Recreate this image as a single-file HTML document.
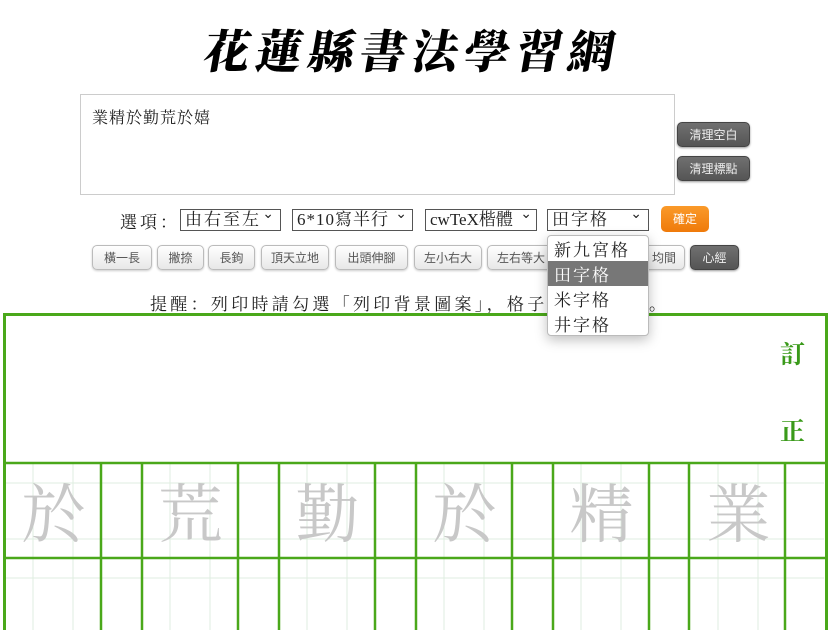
<!DOCTYPE html>
<html><head><meta charset="utf-8"><style>
*{box-sizing:border-box;margin:0;padding:0}
html,body{width:830px;height:630px;overflow:hidden}
body{background:#fff;position:relative;font-family:"Liberation Serif","Noto Serif CJK SC",serif;color:#222}
.abs{position:absolute}
.title{left:205px;top:14px;width:420px;height:70px;font-family:"Noto Serif CJK SC",serif;font-weight:900;font-size:46px;letter-spacing:6px;line-height:70px;transform:skewX(-10deg);color:#000;white-space:nowrap}
.ta{left:80px;top:94px;width:595px;height:101px;border:1px solid #ccc;padding:10px 11px;font-size:16px;letter-spacing:1px;font-family:"Noto Serif CJK SC",serif}
.dbtn{background:linear-gradient(#707070,#555);color:#eee;border:1px solid #444;border-radius:5px;font-size:12px;text-align:center;line-height:24px;font-family:"Noto Sans CJK SC",sans-serif;box-shadow:0 1px 2px #999}
.sel{top:209px;height:22px;border:1px solid #555;font-size:17px;line-height:20px;padding-left:4px;background:#fff;white-space:nowrap;overflow:hidden;font-family:"Liberation Serif","Noto Serif CJK SC",serif}
.sel:after{content:"⌄";position:absolute;right:4px;top:-6px;font-size:14px;font-family:"DejaVu Sans"}
.b{top:245px;height:25px;border:1px solid #bbb;border-radius:5px;background:linear-gradient(#fff,#e8e8e8);font-size:12px;text-align:center;line-height:23px;color:#555;font-family:"Noto Sans CJK SC",sans-serif;box-shadow:0 1px 2px #ccc}
.dd{left:547px;top:235px;width:102px;height:101px;background:#fff;border:1px solid #bbb;border-radius:4px;box-shadow:0 4px 12px rgba(0,0,0,.25);font-size:17px;letter-spacing:2px;font-family:"Noto Serif CJK SC",serif}
.dd div{height:25px;line-height:25px;padding-left:6px}
.grid{left:3px;top:313px;width:825px;height:340px;border:3px solid #4aa81a}
.ch{color:#c8c8c8;font-family:"Noto Serif CJK SC",serif;font-size:64px;width:95px;text-align:center;top:470px;line-height:80px}
</style></head><body>
<div class="abs title">花蓮縣書法學習網</div>
<div class="abs ta">業精於勤荒於嬉</div>
<div class="abs dbtn" style="left:677px;top:122px;width:73px;height:25px">清理空白</div>
<div class="abs dbtn" style="left:677px;top:156px;width:73px;height:25px">清理標點</div>
<div class="abs" style="left:120px;top:208px;font-size:17px;letter-spacing:3px;font-family:'Noto Serif CJK SC',serif">選項：</div>
<div class="abs sel" style="left:180px;width:101px;letter-spacing:2px">由右至左</div>
<div class="abs sel" style="left:292px;width:121px;letter-spacing:1px">6*10寫半行</div>
<div class="abs sel" style="left:425px;width:112px">cwTeX楷體</div>
<div class="abs sel" style="left:547px;width:102px;letter-spacing:2px">田字格</div>
<div class="abs" style="left:661px;top:206px;width:48px;height:26px;background:linear-gradient(#fa9a2a,#ef7a0a);border-radius:5px;color:#fff;font-size:12px;text-align:center;line-height:26px;font-family:'Noto Sans CJK SC',sans-serif">確定</div>
<div class="abs b" style="left:92px;width:60px">橫一長</div>
<div class="abs b" style="left:157px;width:47px">撇捺</div>
<div class="abs b" style="left:208px;width:47px">長鉤</div>
<div class="abs b" style="left:261px;width:68px">頂天立地</div>
<div class="abs b" style="left:335px;width:73px">出頭伸腳</div>
<div class="abs b" style="left:414px;width:68px">左小右大</div>
<div class="abs b" style="left:487px;width:68px">左右等大</div>
<div class="abs b" style="left:630px;width:55px;text-align:right;padding-right:8px">均間</div>
<div class="abs dbtn" style="left:690px;top:245px;width:49px;height:25px">心經</div>
<div class="abs" style="left:150px;top:290px;font-size:17px;letter-spacing:3.3px;white-space:nowrap;font-family:'Noto Serif CJK SC',serif">提醒：列印時請勾選「列印背景圖案」，格子才印得出來。</div>
<div class="abs grid"></div>
<svg class="abs" style="left:0;top:0" width="830" height="630">
<g stroke="#dfeee0" stroke-width="1">
<line x1="6" y1="483" x2="824" y2="483"/><line x1="6" y1="539" x2="824" y2="539"/>
<line x1="6" y1="578" x2="824" y2="578"/>
<line x1="33" y1="463" x2="33" y2="630"/><line x1="73" y1="463" x2="73" y2="630"/>
<line x1="170" y1="463" x2="170" y2="630"/><line x1="210" y1="463" x2="210" y2="630"/>
<line x1="307" y1="463" x2="307" y2="630"/><line x1="347" y1="463" x2="347" y2="630"/>
<line x1="444" y1="463" x2="444" y2="630"/><line x1="484" y1="463" x2="484" y2="630"/>
<line x1="581" y1="463" x2="581" y2="630"/><line x1="621" y1="463" x2="621" y2="630"/>
<line x1="718" y1="463" x2="718" y2="630"/><line x1="758" y1="463" x2="758" y2="630"/>
</g>
<g stroke="#4aa81a" stroke-width="2.5">
<line x1="4" y1="463" x2="826" y2="463"/><line x1="4" y1="558" x2="826" y2="558"/>
<line x1="101" y1="463" x2="101" y2="630"/><line x1="142" y1="463" x2="142" y2="630"/>
<line x1="238" y1="463" x2="238" y2="630"/><line x1="279" y1="463" x2="279" y2="630"/>
<line x1="375" y1="463" x2="375" y2="630"/><line x1="416" y1="463" x2="416" y2="630"/>
<line x1="512" y1="463" x2="512" y2="630"/><line x1="553" y1="463" x2="553" y2="630"/>
<line x1="649" y1="463" x2="649" y2="630"/><line x1="689" y1="463" x2="689" y2="630"/>
<line x1="785" y1="463" x2="785" y2="630"/>
</g>
</svg>
<div class="abs ch" style="left:6px">於</div>
<div class="abs ch" style="left:143px">荒</div>
<div class="abs ch" style="left:280px">勤</div>
<div class="abs ch" style="left:417px">於</div>
<div class="abs ch" style="left:554px">精</div>
<div class="abs ch" style="left:691px">業</div>
<div class="abs" style="left:780px;top:335px;color:#3a9a1a;font-weight:bold;font-size:25px;font-family:'Noto Serif CJK SC',serif">訂</div>
<div class="abs" style="left:780px;top:412px;color:#3a9a1a;font-weight:bold;font-size:25px;font-family:'Noto Serif CJK SC',serif">正</div>
<div class="abs dd">
<div>新九宮格</div>
<div style="background:#777;color:#fff">田字格</div>
<div>米字格</div>
<div>井字格</div>
</div>
</body></html>
